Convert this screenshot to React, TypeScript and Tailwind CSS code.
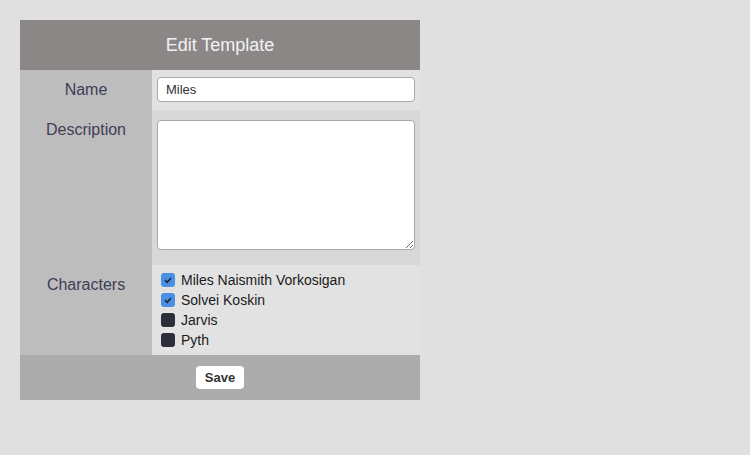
import { useState } from "react";

const characters = [
    { name: "Miles Naismith Vorkosigan", checked: true },
    { name: "Solvei Koskin", checked: true },
    { name: "Jarvis", checked: false },
    { name: "Pyth", checked: false },
];

function Check({ checked, onClick }: { checked: boolean; onClick: () => void }) {
    return (
        <button
            type="button"
            onClick={onClick}
            className={`w-[14px] h-[14px] rounded-[3px] flex items-center justify-center shrink-0 ${checked ? "bg-[#4a90e2]" : "bg-[#2c2e3a]"}`}
        >
            {checked && (
                <svg width="10" height="10" viewBox="0 0 10 10">
                    <path d="M2 5.2 L4.2 7.3 L8 3" fill="none" stroke="#1e2530" strokeWidth="1.6" />
                </svg>
            )}
        </button>
    );
}

export default function App() {
    const [chars, setChars] = useState(characters);

    return (
        <div className="w-[750px] h-[455px] bg-[#e0e0e0] p-5 font-['Liberation_Sans',Arial,sans-serif]">
            <div className="w-[400px]">
                <div className="h-[50px] bg-[#8b8787] flex items-center justify-center text-[18px] text-[#f2f2f2]">
                    Edit Template
                </div>
                <div className="flex">
                    <div className="w-[132px] bg-[#bdbdbd] text-[16px] text-[#3e3e55] text-center">
                        <div className="h-[40px] pt-[8px]">Name</div>
                        <div className="h-[155px] pt-[8px]">Description</div>
                        <div className="h-[90px] pt-[8px]">Characters</div>
                    </div>
                    <div className="flex-1">
                        <div className="h-[40px] bg-[#e2e2e2] pt-[7px] pl-[5px] pr-[5px]">
                            <input
                                defaultValue="Miles"
                                className="w-full h-[25px] bg-white border border-[#a9a9a9] rounded-[4px] px-2 text-[13px] text-[#333] outline-none"
                            />
                        </div>
                        <div className="h-[155px] bg-[#d8d8d8] pt-[10px] pl-[5px] pr-[5px]">
                            <textarea className="w-full h-[130px] block bg-white border border-[#a9a9a9] rounded-[4px] outline-none" />
                        </div>
                        <div className="h-[90px] bg-[#e2e2e2] pt-[5px] pl-[9px] flex flex-col">
                            {chars.map((c, i) => (
                                <div key={c.name} className="h-[20px] flex items-center gap-[6px] text-[14px] text-[#1a1a1a]">
                                    <Check
                                        checked={c.checked}
                                        onClick={() =>
                                            setChars(chars.map((x, j) => (j === i ? { ...x, checked: !x.checked } : x)))
                                        }
                                    />
                                    <span>{c.name}</span>
                                </div>
                            ))}
                        </div>
                    </div>
                </div>
                <div className="h-[45px] bg-[#acacac] flex items-center justify-center">
                    <button
                        type="button"
                        className="h-[23px] px-[9px] bg-white rounded-[4px] text-[13px] font-bold text-[#333]"
                    >
                        Save
                    </button>
                </div>
            </div>
        </div>
    );
}
